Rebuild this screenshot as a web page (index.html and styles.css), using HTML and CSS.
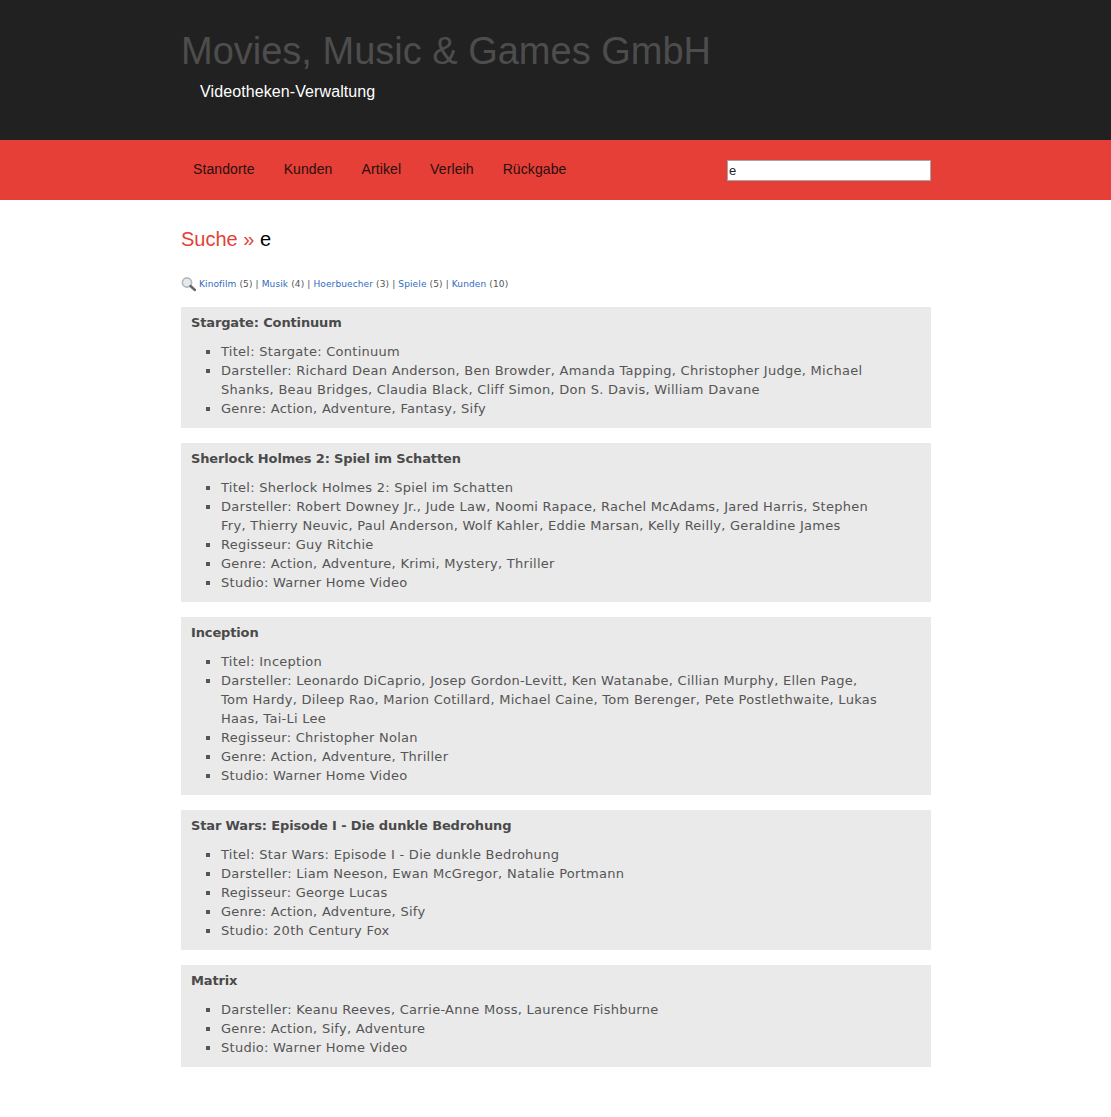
FILE: index.html
```html
<!DOCTYPE html>
<html lang="de">
<head>
  <meta charset="UTF-8" />
  <title>Movies, Music &amp; Games GmbH</title>
  <link rel="stylesheet" href="styles.css">
</head>
<body>
  <div class="header">
    <div class="wrap">
      <h1>Movies, Music &amp; Games GmbH</h1>
      <h2>Videotheken-Verwaltung</h2>
    </div>
  </div>
  <div class="nav">
    <div class="wrap nav-inner">
      <ul class="menu">
        <li><a href="#">Standorte</a></li>
        <li><a href="#">Kunden</a></li>
        <li><a href="#">Artikel</a></li>
        <li><a href="#">Verleih</a></li>
        <li><a href="#">Rückgabe</a></li>
      </ul>
      <input class="search" type="text" value="e">
    </div>
  </div>
  <div class="wrap content">
    <h3 class="page-title"><span class="red">Suche »</span> e</h3>
    <p class="filters">
      <svg class="lens" width="15" height="16" viewBox="0 0 15 16">
        <circle cx="6" cy="6.5" r="4.6" fill="#e4ebf0" stroke="#b4b8ba" stroke-width="1.6"/>
        <path d="M9.5 10l4.4 4" stroke="#666" stroke-width="2.4" stroke-linecap="round"/>
      </svg>
      <a href="#">Kinofilm</a> (5) | <a href="#">Musik</a> (4) | <a href="#">Hoerbuecher</a> (3) | <a href="#">Spiele</a> (5) | <a href="#">Kunden</a> (10)
    </p>

    <div class="card">
      <h4>Stargate: Continuum</h4>
      <ul>
        <li>Titel: Stargate: Continuum</li>
        <li>Darsteller: Richard Dean Anderson, Ben Browder, Amanda Tapping, Christopher Judge, Michael Shanks, Beau Bridges, Claudia Black, Cliff Simon, Don S. Davis, William Davane</li>
        <li>Genre: Action, Adventure, Fantasy, Sify</li>
      </ul>
    </div>

    <div class="card">
      <h4>Sherlock Holmes 2: Spiel im Schatten</h4>
      <ul>
        <li>Titel: Sherlock Holmes 2: Spiel im Schatten</li>
        <li>Darsteller: Robert Downey Jr., Jude Law, Noomi Rapace, Rachel McAdams, Jared Harris, Stephen Fry, Thierry Neuvic, Paul Anderson, Wolf Kahler, Eddie Marsan, Kelly Reilly, Geraldine James</li>
        <li>Regisseur: Guy Ritchie</li>
        <li>Genre: Action, Adventure, Krimi, Mystery, Thriller</li>
        <li>Studio: Warner Home Video</li>
      </ul>
    </div>

    <div class="card">
      <h4>Inception</h4>
      <ul>
        <li>Titel: Inception</li>
        <li>Darsteller: Leonardo DiCaprio, Josep Gordon-Levitt, Ken Watanabe, Cillian Murphy, Ellen Page, Tom Hardy, Dileep Rao, Marion Cotillard, Michael Caine, Tom Berenger, Pete Postlethwaite, Lukas Haas, Tai-Li Lee</li>
        <li>Regisseur: Christopher Nolan</li>
        <li>Genre: Action, Adventure, Thriller</li>
        <li>Studio: Warner Home Video</li>
      </ul>
    </div>

    <div class="card">
      <h4>Star Wars: Episode I - Die dunkle Bedrohung</h4>
      <ul>
        <li>Titel: Star Wars: Episode I - Die dunkle Bedrohung</li>
        <li>Darsteller: Liam Neeson, Ewan McGregor, Natalie Portmann</li>
        <li>Regisseur: George Lucas</li>
        <li>Genre: Action, Adventure, Sify</li>
        <li>Studio: 20th Century Fox</li>
      </ul>
    </div>

    <div class="card">
      <h4>Matrix</h4>
      <ul>
        <li>Darsteller: Keanu Reeves, Carrie-Anne Moss, Laurence Fishburne</li>
        <li>Genre: Action, Sify, Adventure</li>
        <li>Studio: Warner Home Video</li>
      </ul>
    </div>
  </div>
</body>
</html>
```

FILE: styles.css
```css
* {
  box-sizing: border-box;
  margin: 0;
  padding: 0;
}
body {
  font-family: "DejaVu Sans", Verdana, sans-serif;
  font-size: 13px;
  color: #555;
  background: #fff;
}
.wrap {
  width: 750px;
  margin-left: 181px;
}
.header {
  background: #212121;
  height: 140px;
  padding-top: 29px;
}
.header h1 {
  font-family: "Liberation Sans", Arial, sans-serif;
  font-size: 38px;
  font-weight: normal;
  line-height: 44px;
  color: #4d4d4d;
}
.header h2 {
  font-family: "Liberation Sans", Arial, sans-serif;
  font-size: 16px;
  font-weight: normal;
  letter-spacing: 0.1px;
  line-height: 20px;
  color: #fff;
  margin-top: 9px;
  padding-left: 19px;
}
.nav {
  background: #e53f38;
  height: 60px;
}
.nav-inner {
  display: flex;
  justify-content: space-between;
  align-items: center;
  height: 60px;
}
.menu {
  display: flex;
  list-style: none;
  gap: 29px;
  padding-left: 12px;
  margin-top: -2px;
}
.menu a {
  font-family: "Liberation Sans", Arial, sans-serif;
  font-size: 14px;
  letter-spacing: 0.1px;
  color: #2a0f0d;
  text-decoration: none;
}
.search {
  width: 204px;
  height: 21px;
  border: 1px solid #a5a5a5;
  background: #fff;
  padding: 0 1px;
  font-family: "Liberation Sans", Arial, sans-serif;
  font-size: 13px;
  color: #222;
  outline: none;
}
.page-title {
  font-family: "Liberation Sans", Arial, sans-serif;
  font-size: 20px;
  font-weight: normal;
  line-height: 24px;
  color: #000;
  padding-top: 27px;
}
.red {
  color: #e53f38;
}
.filters {
  font-size: 9px;
  letter-spacing: 0.12px;
  line-height: 14px;
  margin-top: 25px;
  margin-bottom: 15px;
}
.filters a {
  color: #2f6bc0;
  text-decoration: none;
}
.lens {
  vertical-align: middle;
}
.card {
  background: #eaeaea;
  padding: 8px 10px 10px;
  margin-bottom: 15px;
}
.card h4 {
  font-size: 13px;
  font-weight: bold;
  letter-spacing: -0.14px;
  line-height: 16px;
  color: #4a4a4a;
  margin-bottom: 11px;
}
.card ul {
  list-style: square;
  padding-left: 30px;
  padding-right: 40px;
}
.card li {
  line-height: 19px;
  letter-spacing: 0.27px;
}
```
